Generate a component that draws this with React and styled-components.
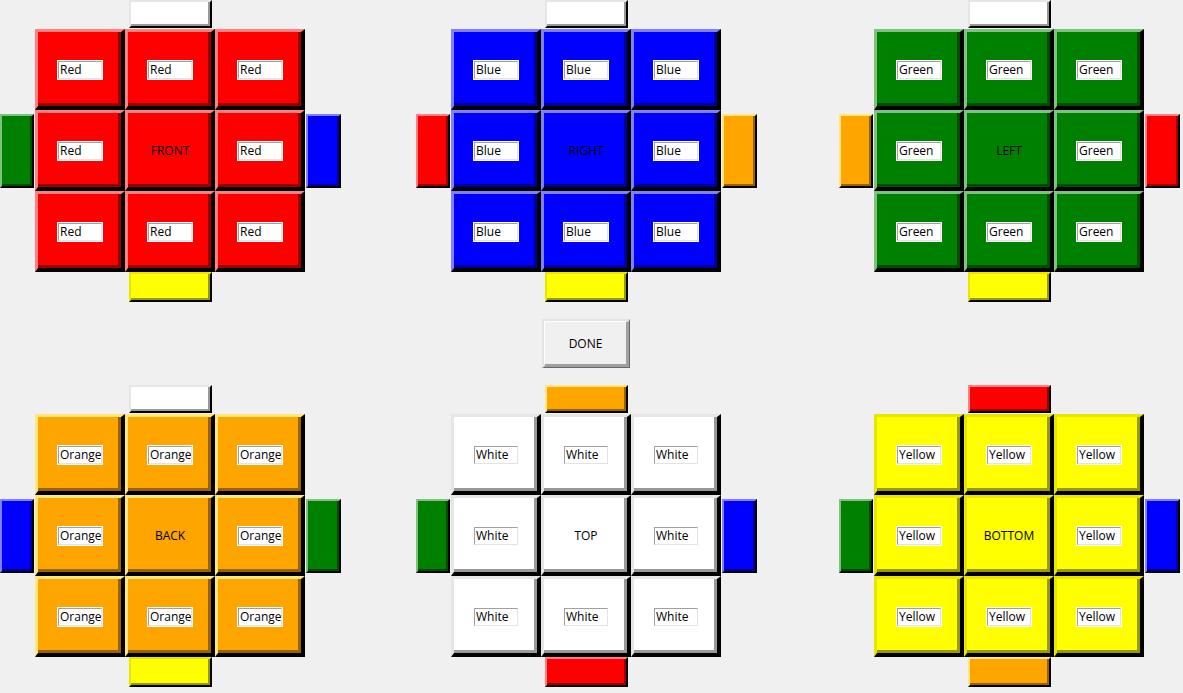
import React from "react";
import styled, { createGlobalStyle } from "styled-components";

const GlobalStyle = createGlobalStyle`
  html, body { margin: 0; padding: 0; background: #f0f0f0; }
  body { font-family: "Open Sans", "Liberation Sans", sans-serif; }
`;

const PALETTE = {
  red: { bg: "#ff0000", light: "#ff8080", dark: "#990000" },
  blue: { bg: "#0000ff", light: "#8080ff", dark: "#000099" },
  green: { bg: "#008000", light: "#80c080", dark: "#004d00" },
  orange: { bg: "#ffa500", light: "#ffe780", dark: "#996300" },
  white: { bg: "#ffffff", light: "#e6e6e6", dark: "#999999" },
  yellow: { bg: "#ffff00", light: "#e6e600", dark: "#999900" },
};

const FACES = [
  { name: "FRONT", color: "red", label: "Red", top: "white", left: "green", right: "blue", bottom: "yellow" },
  { name: "RIGHT", color: "blue", label: "Blue", top: "white", left: "red", right: "orange", bottom: "yellow" },
  { name: "LEFT", color: "green", label: "Green", top: "white", left: "orange", right: "red", bottom: "yellow" },
  { name: "BACK", color: "orange", label: "Orange", top: "white", left: "blue", right: "green", bottom: "yellow" },
  { name: "TOP", color: "white", label: "White", top: "orange", left: "green", right: "blue", bottom: "red" },
  { name: "BOTTOM", color: "yellow", label: "Yellow", top: "red", left: "green", right: "blue", bottom: "orange" },
];

const Page = styled.div`
  display: grid;
  grid-template-columns: 416px 423px 344px;
  grid-template-rows: 302px 83px 308px;
  width: 1183px;
  height: 693px;
  overflow: hidden;
`;

const FacePanel = styled.div`
  display: grid;
  grid-template-columns: 35px repeat(3, 90px) 36px;
  grid-template-rows: 29px repeat(3, 81px) 30px;
  align-self: start;
`;

const Tile = styled.div`
  box-sizing: border-box;
  grid-column: ${(p) => p.$col};
  grid-row: ${(p) => p.$row};
  width: 90px;
  height: 81px;
  border-style: solid;
  border-width: 3px 4px 4px 3px;
  border-color: ${(p) => `${p.$c.light} #000 #000 ${p.$c.light}`};
  background: ${(p) => p.$c.bg};
`;

const TileFace = styled.div`
  box-sizing: border-box;
  width: 100%;
  height: 100%;
  border-style: solid;
  border-width: 0 3px 3px 0;
  border-color: ${(p) => p.$c.dark};
  padding: 4px 0 0 4px;
  display: flex;
  align-items: center;
  justify-content: center;
`;

const Swatch = styled.div`
  box-sizing: border-box;
  grid-column: ${(p) => p.$col};
  grid-row: ${(p) => p.$row};
  justify-self: ${(p) => p.$justify};
  align-self: ${(p) => p.$align};
  width: ${(p) => p.$w}px;
  height: ${(p) => p.$h}px;
  border-style: solid;
  border-width: 2px;
  border-color: ${(p) => `${p.$c.light} #000 #000 ${p.$c.light}`};
  background: ${(p) => p.$c.bg};
`;

const SwatchFace = styled.div`
  box-sizing: border-box;
  width: 100%;
  height: 100%;
  border-style: solid;
  border-width: 0 2px 2px 0;
  border-color: ${(p) => p.$c.dark};
`;

const Entry = styled.input`
  box-sizing: border-box;
  width: 44px;
  height: 18px;
  margin: 0;
  padding: 0 0 0 1px;
  border-style: solid;
  border-width: 1px;
  border-color: #a0a0a0 #e3e3e3 #e3e3e3 #a0a0a0;
  outline: 1px solid #ffffff;
  outline-offset: 0;
  background: #ffffff;
  color: #000;
  font-family: "Open Sans", "Liberation Sans", sans-serif;
  font-size: 12px;
  line-height: 16px;
`;

const FaceName = styled.span`
  font-size: 12px;
  color: #000;
  letter-spacing: 0;
`;

const DoneSlot = styled.div`
  grid-column: 2;
  grid-row: 2;
  width: 270px;
  margin-left: 35px;
  display: flex;
  align-items: center;
  justify-content: center;
`;

const DoneButton = styled.button`
  box-sizing: border-box;
  width: 88px;
  height: 49px;
  margin: 0;
  padding: 0;
  border-style: solid;
  border-width: 2px 1px 1px 2px;
  border-color: #e3e3e3 #696969 #696969 #e3e3e3;
  background: #f0f0f0;
  cursor: pointer;
`;

const DoneInner = styled.span`
  box-sizing: border-box;
  display: flex;
  align-items: center;
  justify-content: center;
  width: 100%;
  height: 100%;
  border-style: solid;
  border-width: 1px 3px 3px 1px;
  border-color: #ffffff #a0a0a0 #a0a0a0 #ffffff;
  font-family: "Open Sans", "Liberation Sans", sans-serif;
  font-size: 12px;
  color: #000;
`;

function EdgeSwatch({ color, col, row, justify, align, w, h }) {
  const c = PALETTE[color];
  return (
    <Swatch $c={c} $col={col} $row={row} $justify={justify} $align={align} $w={w} $h={h}>
      <SwatchFace $c={c} />
    </Swatch>
  );
}

function Face({ face, gridCol, gridRow }) {
  const c = PALETTE[face.color];
  const tiles = [];
  for (let r = 0; r < 3; r++) {
    for (let k = 0; k < 3; k++) {
      const center = r === 1 && k === 1;
      tiles.push(
        <Tile key={`${r}-${k}`} $c={c} $col={k + 2} $row={r + 2}>
          <TileFace $c={c}>
            {center ? <FaceName>{face.name}</FaceName> : <Entry readOnly defaultValue={face.label} />}
          </TileFace>
        </Tile>
      );
    }
  }
  return (
    <FacePanel style={{ gridColumn: gridCol, gridRow: gridRow }}>
      <EdgeSwatch color={face.top} col={3} row={1} justify="center" align="start" w={83} h={28} />
      <EdgeSwatch color={face.left} col={1} row={3} justify="start" align="center" w={34} h={74} />
      {tiles}
      <EdgeSwatch color={face.right} col={5} row={3} justify="end" align="center" w={35} h={74} />
      <EdgeSwatch color={face.bottom} col={3} row={5} justify="center" align="end" w={83} h={30} />
    </FacePanel>
  );
}

export default function App() {
  return (
    <>
      <GlobalStyle />
      <Page>
        {FACES.map((f, i) => (
          <Face key={f.name} face={f} gridCol={(i % 3) + 1} gridRow={i < 3 ? 1 : 3} />
        ))}
        <DoneSlot>
          <DoneButton type="button">
            <DoneInner>DONE</DoneInner>
          </DoneButton>
        </DoneSlot>
      </Page>
    </>
  );
}
